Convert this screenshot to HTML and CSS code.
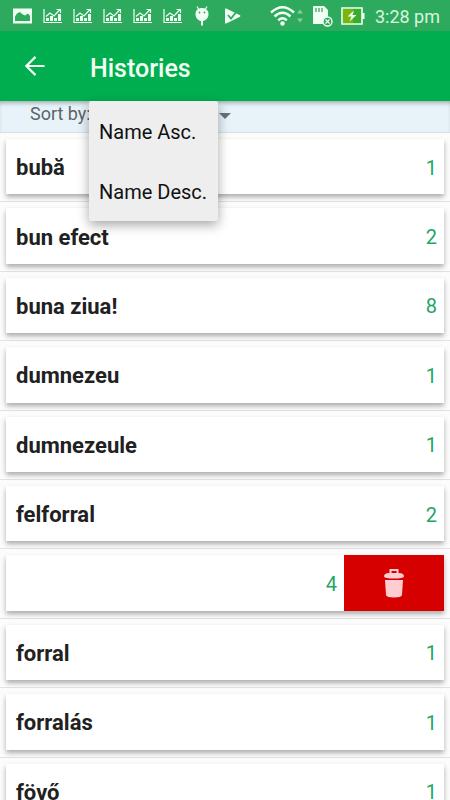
FILE: index.html
```html
<!DOCTYPE html>
<html lang="en">
<head>
    <meta charset="UTF-8">
    <meta name="viewport" content="width=device-width, initial-scale=1.0">
    <title>Histories</title>
    <link rel="stylesheet" href="styles.css">
</head>
<body>
    <svg class="symbols" aria-hidden="true">
        <symbol id="chart" viewBox="0 0 20 16">
            <path d="M2 1V14.5H20" fill="none" stroke="currentColor" stroke-width="1.2"/>
            <path d="M4 8.5L8 5L12 8L18 1.5M14.5 1.500H18.500V5" fill="none" stroke="currentColor" stroke-width="1.2"/>
            <path d="M4 10H7V13H4ZM8 8H11V13H8ZM12 10H15V13H12ZM16 6H19V13H16Z" fill="currentColor"/>
        </symbol>
    </svg>

    <div class="status-bar">
        <div class="notifications">
            <svg width="20" height="16" viewBox="0 0 20 16"><path fill="currentColor" fill-rule="evenodd" d="M1 0.500H20V15.500H1ZM3 10.500V13H18V8L16 5.500L13 7.500L10 6L8 4L5 5.500L3 8.500Z"/></svg>
            <svg width="20" height="16"><use href="#chart"/></svg>
            <svg width="20" height="16"><use href="#chart"/></svg>
            <svg width="20" height="16"><use href="#chart"/></svg>
            <svg width="20" height="16"><use href="#chart"/></svg>
            <svg width="20" height="16"><use href="#chart"/></svg>
            <svg width="20" height="20" viewBox="0 0 20 20">
                <path d="M5 0.500L7 4M15 0.500L13 4" stroke="currentColor" stroke-width="1.2"/>
                <path d="M10 2C6 2 3.500 4.500 3.500 8C3.500 12 6 14.500 9 15V19.500H11V15C14 14.500 16.500 12 16.500 8C16.500 4.500 14 2 10 2Z" fill="currentColor"/>
                <circle cx="7.5" cy="6.5" r="0.9" fill="#2eaa5e"/>
                <circle cx="12.5" cy="6.5" r="0.9" fill="#2eaa5e"/>
            </svg>
            <svg width="20" height="16" viewBox="0 0 20 16">
                <path d="M3 1.200Q3 0 4.200 0.600L18 7.300Q19 8 18 8.700L4.200 15.400Q3 16 3 14.800Z" fill="currentColor"/>
                <path d="M6 7L9 10.500L15 3" fill="none" stroke="#2eaa5e" stroke-width="1.8"/>
            </svg>
        </div>
        <div class="system">
            <svg width="34" height="22" viewBox="0 0 34 22">
                <g fill="none" stroke="currentColor" stroke-width="2.4">
                    <path d="M1 7.500Q12.500 -3 24 7.500"/>
                    <path d="M4.500 11.500Q12.500 4 20.500 11.500"/>
                    <path d="M8.200 15.300Q12.500 11.300 16.800 15.300"/>
                </g>
                <circle cx="12.5" cy="18.5" r="2.2" fill="currentColor"/>
                <path d="M27 8.500L30 4.500L33 8.500ZM27 13.500L30 17.500L33 13.500Z" fill="#8fc99b"/>
            </svg>
            <svg width="21" height="22" viewBox="0 0 21 22">
                <path d="M2 1H12L16 5V19H1V2Q1 1 2 1Z" fill="currentColor"/>
                <path d="M4 3V7M7 3V7M10 3V7" stroke="#2eaa5e" stroke-width="1.3"/>
                <circle cx="15.5" cy="16.5" r="4.5" fill="#2eaa5e" stroke="currentColor" stroke-width="1.4"/>
                <path d="M13.500 14.500L17.500 18.500M17.500 14.500L13.500 18.500" stroke="currentColor" stroke-width="1.3"/>
            </svg>
            <svg width="24" height="18" viewBox="0 0 24 18">
                <path d="M1 1H21V17H1Z" fill="#3aab2f" stroke="currentColor" stroke-width="1.6"/>
                <path d="M2 2H12V16H2Z" fill="#78b60b"/>
                <path d="M21 6H23.500V12H21Z" fill="currentColor"/>
                <path d="M13 3.500L6.500 9.500H10.500L8.500 14.500L15.500 8H11.500Z" fill="currentColor"/>
            </svg>
            <time class="clock">3:28 pm</time>
        </div>
    </div>

    <header class="app-bar">
        <button class="back" type="button" aria-label="Back">
            <svg width="20" height="20" viewBox="0 0 20 20"><path d="M19.500 10H1.500M10.500 0.900L1.400 10L10.500 19.100" fill="none" stroke="currentColor" stroke-width="2.2"/></svg>
        </button>
        <h1>Histories</h1>
    </header>

    <div class="sort-bar">
        <label for="sort">Sort by:</label>
        <div class="sort-field">
            <select id="sort">
                <option>Name Asc.</option>
                <option>Name Desc.</option>
            </select>
            <svg class="arrow" width="12" height="6" viewBox="0 0 12 6"><path d="M0 0H12L6 6Z" fill="#677176"/></svg>
            <div class="sort-menu">
                <button type="button">Name Asc.</button>
                <button type="button">Name Desc.</button>
            </div>
        </div>
    </div>

    <ul class="histories">
        <li><div class="card"><span class="name">bubă</span><span class="count">1</span></div></li>
        <li><div class="card"><span class="name">bun efect</span><span class="count">2</span></div></li>
        <li><div class="card"><span class="name">buna ziua!</span><span class="count">8</span></div></li>
        <li><div class="card"><span class="name">dumnezeu</span><span class="count">1</span></div></li>
        <li><div class="card"><span class="name">dumnezeule</span><span class="count">1</span></div></li>
        <li><div class="card"><span class="name">felforral</span><span class="count">2</span></div></li>
        <li>
            <div class="card swiped">
                <span class="count">4</span>
                <button class="delete" type="button" aria-label="Delete">
                    <svg width="20" height="30" viewBox="0 0 20 30">
                        <path d="M6.500 6V2H13.500V6" fill="none" stroke="#ffccd2" stroke-width="2"/>
                        <path d="M0 8.500Q0 5 5 5H15Q20 5 20 8.500Q19 10.500 10 10.500T0 8.500Z" fill="#ffccd2"/>
                        <path d="M1 12H19L18 27Q17.500 29.500 10 29.500T2 27Z" fill="#ffccd2"/>
                    </svg>
                </button>
            </div>
        </li>
        <li><div class="card"><span class="name">forral</span><span class="count">1</span></div></li>
        <li><div class="card"><span class="name">forralás</span><span class="count">1</span></div></li>
        <li><div class="card"><span class="name">fövő</span><span class="count">1</span></div></li>
    </ul>
</body>
</html>
```
FILE: styles.css
```css
* {
    box-sizing: border-box;
}
body {
    display: flex;
    flex-direction: column;
    height: 100vh;
    margin: 0;
    overflow: hidden;
    font-family: Roboto, sans-serif;
    background-color: #fcfcfc;
}
button {
    border: none;
    padding: 0;
    font-family: inherit;
    cursor: pointer;
}
svg {
    display: block;
    flex: none;
}
.symbols {
    position: absolute;
    width: 0;
    height: 0;
}

/* status bar */
.status-bar {
    display: flex;
    flex: none;
    justify-content: space-between;
    align-items: center;
    height: 31px;
    padding: 0 10px 0 12px;
    background-color: #2eaa5e;
    color: #f0fff2;
}
.notifications,
.system {
    display: flex;
    align-items: center;
}
.notifications {
    gap: 10px;
}
.system {
    gap: 8px;
}
.clock {
    margin-left: 2px;
    padding-top: 2px;
    font-size: 18px;
    color: #d8f5df;
}

/* app bar */
.app-bar {
    display: flex;
    flex: none;
    align-items: center;
    height: 70px;
    padding: 0 25px;
    gap: 45px;
    background-color: #00ae50;
    color: #f4fff4;
}
.back {
    background: none;
    color: inherit;
}
.app-bar h1 {
    margin: 0;
    padding-top: 4px;
    font-size: 25px;
    font-weight: 500;
}

/* sort bar */
.sort-bar {
    position: relative;
    display: flex;
    flex: none;
    height: 32px;
    padding-left: 30px;
    border-bottom: 1px solid #d8dfe2;
    background-color: #e7f3f9;
    box-shadow: inset 0 4px 4px -2px rgba(0, 0, 0, 0.3);
    color: #5c6468;
    font-size: 18px;
    line-height: 26px;
    z-index: 1;
}
.sort-bar label {
    flex: none;
    width: 59px;
    white-space: nowrap;
}
.sort-field {
    position: relative;
    height: 28px;
}
.sort-field select {
    width: 142px;
    height: 26px;
    padding: 0 10px;
    border: none;
    background: none;
    color: inherit;
    font-family: inherit;
    font-size: 18px;
    appearance: none;
}
.arrow {
    position: absolute;
    right: 0;
    top: 12px;
    pointer-events: none;
}
.sort-menu {
    position: absolute;
    top: 0;
    left: 0;
    display: flex;
    flex-direction: column;
    width: 129px;
    border-radius: 2px;
    background-color: #eee;
    box-shadow: 0 4px 12px rgba(0, 0, 0, 0.35);
}
.sort-menu button {
    height: 60px;
    padding: 2px 0 0 10px;
    background: none;
    color: #111;
    font-size: 20px;
    text-align: left;
    white-space: nowrap;
}

/* list */
.histories {
    display: grid;
    flex: none;
    grid-auto-rows: 1fr;
    min-height: 694px;
    margin: 0;
    padding: 0;
    list-style: none;
}
.histories li {
    display: flex;
    padding: 6px 6px 7px;
    border-bottom: 1px solid #e2e2e2;
}
.card {
    display: flex;
    flex: 1;
    align-items: center;
    justify-content: space-between;
    padding: 0 7px 0 10px;
    background-color: #fff;
    box-shadow: 0 3px 5px rgba(0, 0, 0, 0.32);
}
.name {
    padding-top: 3px;
    color: #212121;
    font-size: 22px;
    font-weight: bold;
    line-height: 28px;
}
.count {
    padding-top: 2px;
    color: #1fa567;
    font-size: 20px;
    line-height: 28px;
}
.swiped {
    justify-content: flex-end;
    padding-right: 0;
}
.delete {
    display: flex;
    align-items: center;
    justify-content: center;
    align-self: stretch;
    width: 100px;
    margin-left: 7px;
    background-color: #d60000;
}
```
